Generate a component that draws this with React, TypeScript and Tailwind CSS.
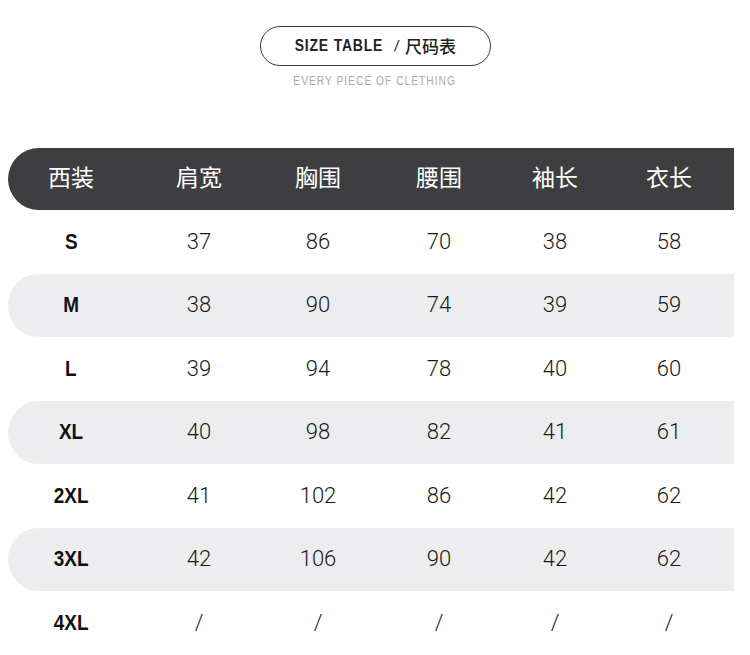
const headers = ['西装', '肩宽', '胸围', '腰围', '袖长', '衣长']

const rows = [
  ['S', '37', '86', '70', '38', '58'],
  ['M', '38', '90', '74', '39', '59'],
  ['L', '39', '94', '78', '40', '60'],
  ['XL', '40', '98', '82', '41', '61'],
  ['2XL', '41', '102', '86', '42', '62'],
  ['3XL', '42', '106', '90', '42', '62'],
  ['4XL', '/', '/', '/', '/', '/'],
]

const cols = 'grid grid-cols-[126px_130px_108px_134px_98px_130px]'

export default function App() {
  return (
    <div className="w-[750px] h-[655px] bg-white overflow-hidden font-['Roboto','Noto_Sans_CJK_SC',sans-serif]">
      {/* Title */}
      <div className="flex flex-col items-center pt-[26px]">
        <div className="w-[231px] h-[40px] rounded-full border border-[#3a3a3a] flex items-center justify-center gap-[5px] text-[#222]">
          <span className="inline-block -mx-[9px] scale-x-[0.82] font-['Liberation_Sans',sans-serif] text-[17px] font-bold tracking-[1px]">
            SIZE TABLE
          </span>
          <span className="text-[15px] ml-[5px]">/</span>
          <span className="font-['Noto_Sans_CJK_SC',sans-serif] text-[17px] font-medium">尺码表</span>
        </div>
        <div className="mt-[6px] inline-block scale-x-[0.85] font-['Liberation_Sans',sans-serif] text-[12px] tracking-[1.2px] text-[#aaaaaa]">
          EVERY PIECE OF CLETHING
        </div>
      </div>

      {/* Table */}
      <div className="mt-[58px] ml-[8px] w-[726px]">
        <div className={`${cols} h-[62px] items-center bg-[#3e3e40] rounded-l-[31px] text-white`}>
          {headers.map((h) => (
            <div key={h} className="text-center font-['Noto_Sans_CJK_SC',sans-serif] text-[23px] leading-none pb-[6px]">
              {h}
            </div>
          ))}
        </div>

        {rows.map((r, i) => (
          <div
            key={r[0]}
            className={`${cols} h-[63.5px] items-center rounded-l-[31px] ${i % 2 === 1 ? 'bg-[#ededf0]' : ''}`}
          >
            {r.map((v, j) =>
              j === 0 ? (
                <div key={j} className="text-center leading-none">
                  <span className="inline-block scale-x-[0.86] font-['Liberation_Sans',sans-serif] font-bold text-[22px] text-[#111]">
                    {v}
                  </span>
                </div>
              ) : (
                <div key={j} className="text-center text-[22px] font-light text-[#1a1a1a] leading-none">
                  {v}
                </div>
              )
            )}
          </div>
        ))}
      </div>
    </div>
  )
}
